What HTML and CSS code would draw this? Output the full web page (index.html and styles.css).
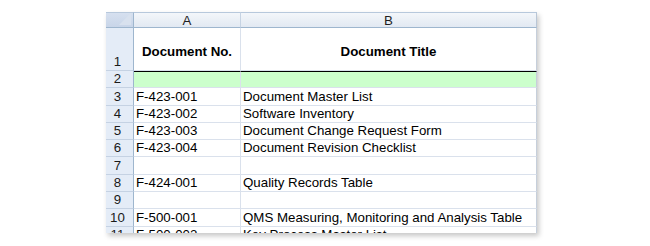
FILE: index.html
```html
<!DOCTYPE html>
<html>
<head>
<meta charset="utf-8">
<link rel="stylesheet" href="styles.css">
</head>
<body>
<div class="frame">
  <div class="sheet">
    <div class="corner"><svg class="tri" width="12" height="12" viewBox="0 0 12 12"><polygon points="12,0 12,12 0,12" fill="#d8e1ee"/></svg></div>
    <div class="colhead">A</div>
    <div class="colhead last">B</div>

    <div class="rowhead tall">1</div>
    <div class="cell head">Document No.</div>
    <div class="cell head last">Document Title</div>

    <div class="rowhead">2</div>
    <div class="cell green topline"></div>
    <div class="cell green topline last"></div>

    <div class="rowhead">3</div>
    <div class="cell">F-423-001</div>
    <div class="cell last">Document Master List</div>

    <div class="rowhead">4</div>
    <div class="cell">F-423-002</div>
    <div class="cell last">Software Inventory</div>

    <div class="rowhead">5</div>
    <div class="cell">F-423-003</div>
    <div class="cell last">Document Change Request Form</div>

    <div class="rowhead">6</div>
    <div class="cell">F-423-004</div>
    <div class="cell last">Document Revision Checklist</div>

    <div class="rowhead">7</div>
    <div class="cell"></div>
    <div class="cell last"></div>

    <div class="rowhead">8</div>
    <div class="cell">F-424-001</div>
    <div class="cell last">Quality Records Table</div>

    <div class="rowhead">9</div>
    <div class="cell"></div>
    <div class="cell last"></div>

    <div class="rowhead">10</div>
    <div class="cell">F-500-001</div>
    <div class="cell last">QMS Measuring, Monitoring and Analysis Table</div>

    <div class="rowhead">11</div>
    <div class="cell">F-500-002</div>
    <div class="cell last">Key Process Master List</div>
  </div>
</div>
</body>
</html>
```
FILE: styles.css
```css
html, body {
  margin: 0;
  padding: 0;
  background: #ffffff;
}
body {
  width: 650px;
  height: 246px;
  overflow: hidden;
  font-family: "Liberation Sans", Arial, sans-serif;
}
.frame {
  padding: 12px 0 0 106px;
}
.sheet {
  width: 431px;
  height: 221px;
  overflow: hidden;
  display: grid;
  grid-template-columns: 28px 107px 296px;
  grid-template-rows: 16px 43px;
  grid-auto-rows: 17.3px;
  box-shadow: 2px 3px 5px rgba(0, 0, 0, 0.22);
  background: #ffffff;
  font-size: 13.3px;
  color: #000;
}
.corner {
  position: relative;
  background: linear-gradient(#d6e0ef, #c8d5e8);
  border-right: 1px solid #9eb6ce;
  border-bottom: 1px solid #9eb6ce;
  border-top: 1px solid #b7c8dc;
}
.tri {
  position: absolute;
  right: 2px;
  bottom: 2px;
}
.colhead {
  background: linear-gradient(#f3f6fa, #e2e9f2);
  border-top: 1px solid #b7c8dc;
  border-right: 1px solid #c6d3e3;
  border-bottom: 1px solid #9eb6ce;
  text-align: center;
  line-height: 15px;
  font-size: 13.3px;
  color: #1f1f1f;
}
.colhead.last {
  border-right: 1px solid #b9c6d6;
}
.rowhead {
  background: #e4ecf7;
  border-right: 1px solid #9eb6ce;
  border-bottom: 1px solid #c5d2e3;
  padding-right: 4px;
  font-size: 13.3px;
  line-height: 16px;
  color: #1a1a1a;
  display: flex;
  align-items: flex-end;
  justify-content: center;
}
.cell {
  border-right: 1px solid #dae1ec;
  border-bottom: 1px solid #dae1ec;
  padding-left: 2px;
  line-height: 16px;
  white-space: nowrap;
  overflow: hidden;
  display: flex;
  align-items: flex-end;
}
.cell.last {
  border-right: 1px solid #c6cfdb;
}
.cell.head {
  font-weight: bold;
  justify-content: center;
  align-items: center;
  padding-left: 0;
  padding-top: 5px;
}
.green {
  background: #ccffcc;
}
.topline {
  border-top: 1px solid #000;
}
```
